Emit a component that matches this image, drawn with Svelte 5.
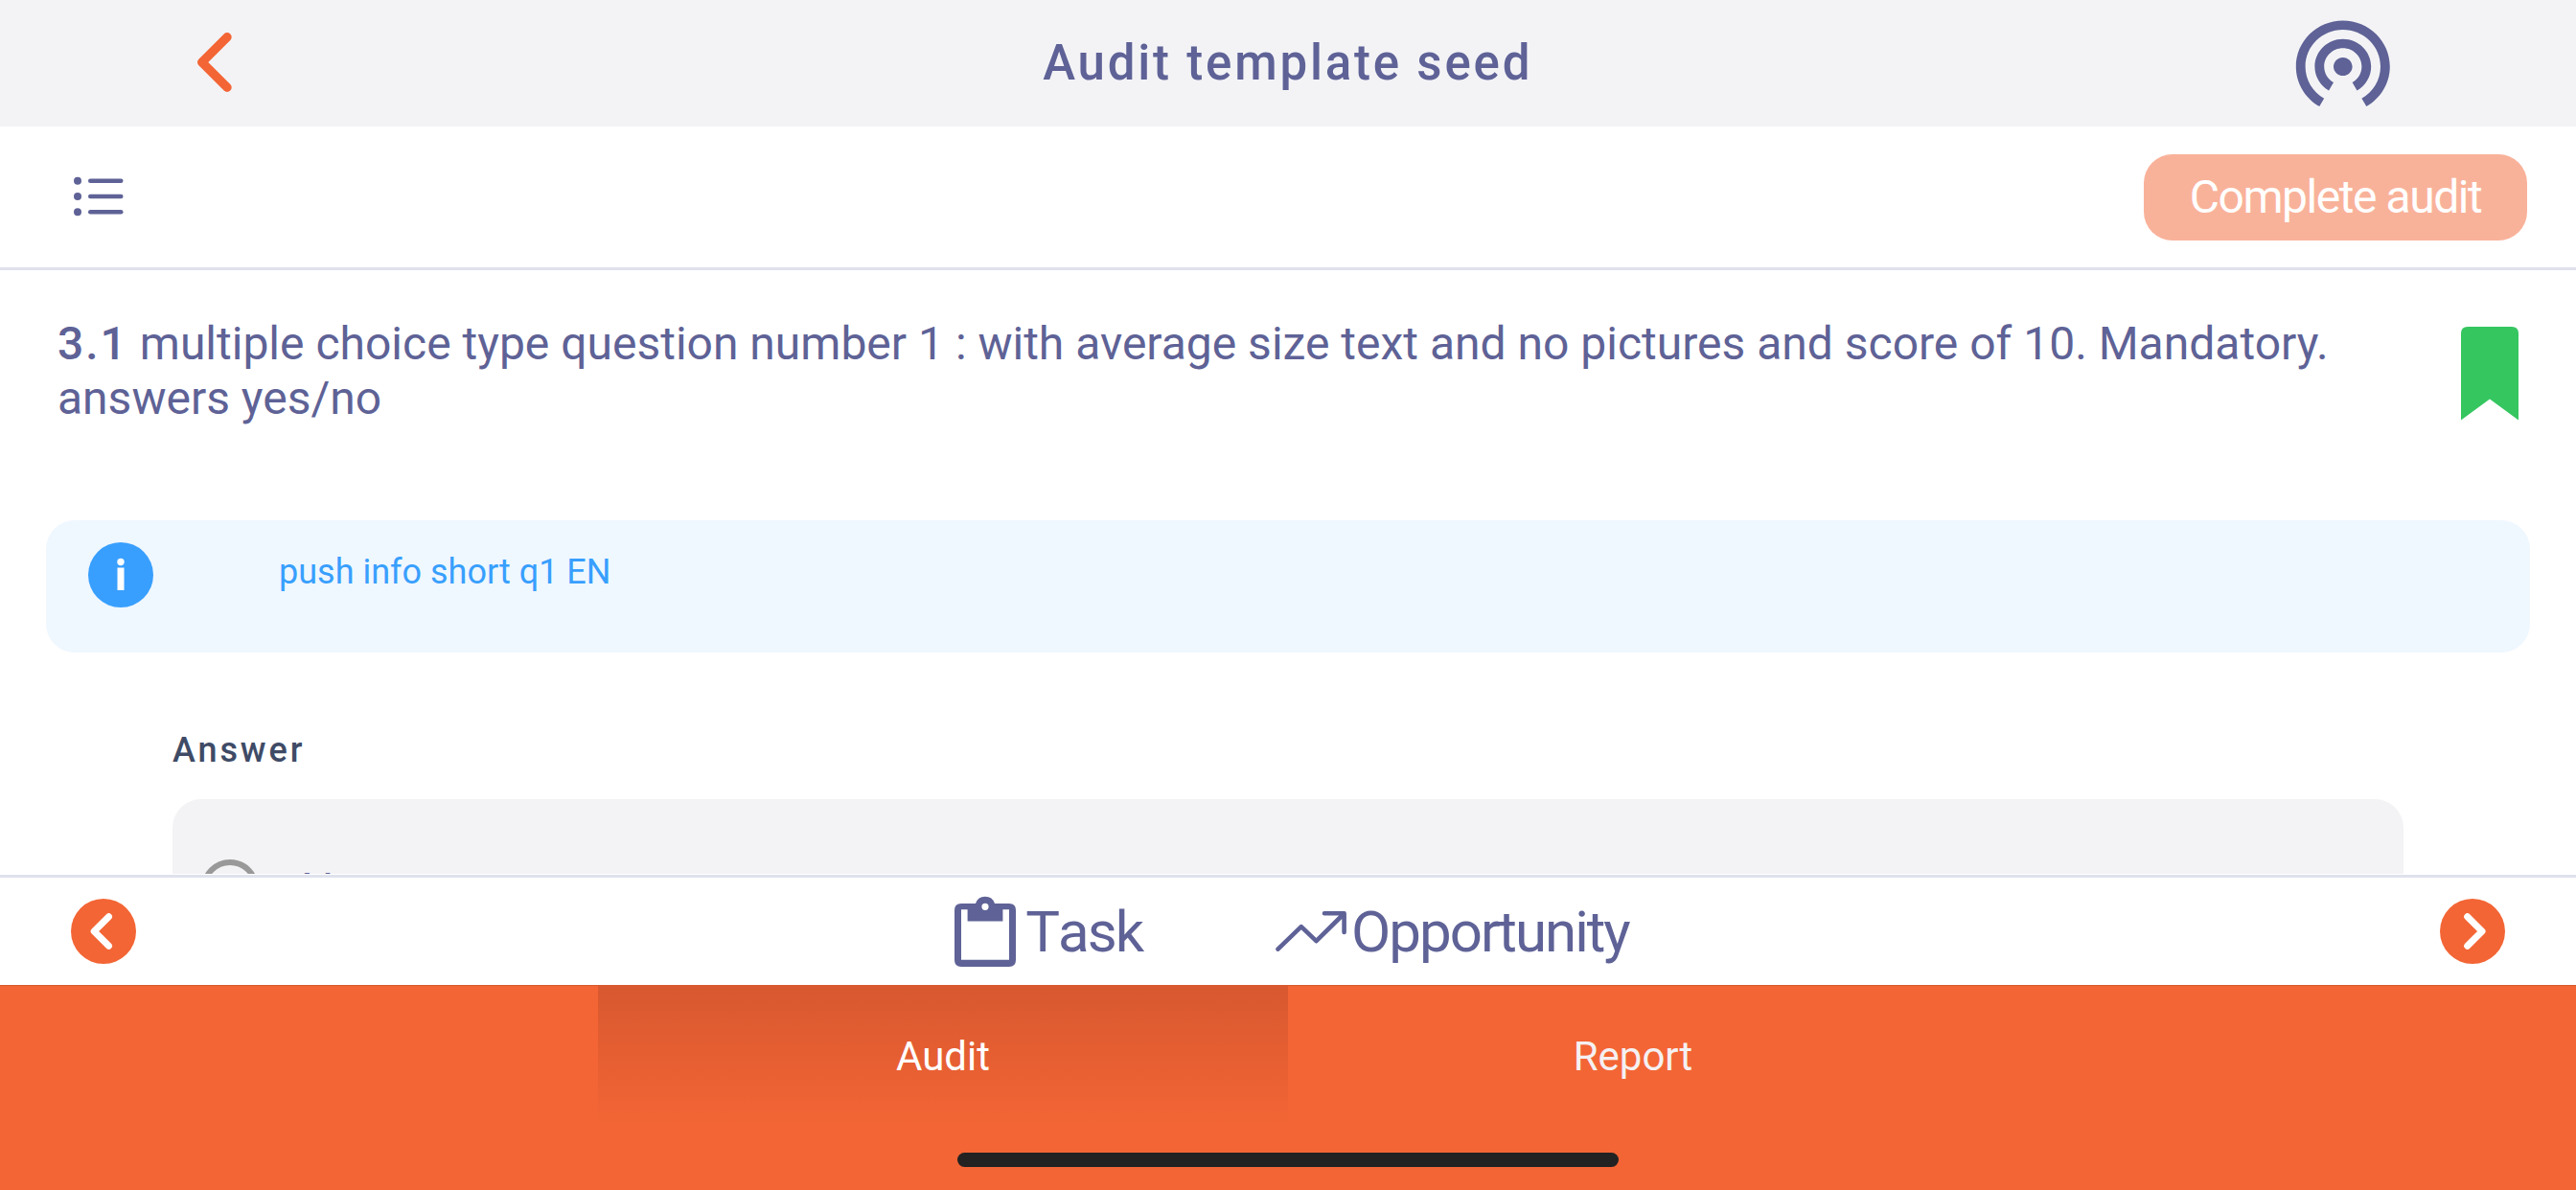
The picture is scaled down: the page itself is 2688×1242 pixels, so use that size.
<script lang="ts">
	let {
		title = 'Audit template seed',
		questionNumber = '3.1',
		question = 'multiple choice type question number 1 : with average size text and no pictures and score of 10. Mandatory. answers yes/no',
		info = 'push info short q1 EN',
		answers = ['No'],
	}: {
		title?: string;
		questionNumber?: string;
		question?: string;
		info?: string;
		answers?: string[];
	} = $props();

	const tabs = ['Audit', 'Report'];
	let activeTab = $state('Audit');
	let selected = $state('');
</script>

<div class="screen">
	<header class="header">
		<button class="back" aria-label="Back">
			<svg width="36" height="62" viewBox="0 0 36 62">
				<path d="M31 4.7 4.7 31 31 57.3" />
			</svg>
		</button>
		<h1 class="title">{title}</h1>
		<svg class="tether" viewBox="0 0 24 24" preserveAspectRatio="none">
			<path d="M12 11c-1.1 0-2 .9-2 2s.9 2 2 2 2-.9 2-2-.9-2-2-2zm6 2c0-3.31-2.69-6-6-6s-6 2.69-6 6c0 2.22 1.21 4.15 3 5.19l1-1.74c-1.19-.7-2-1.97-2-3.45 0-2.21 1.79-4 4-4s4 1.79 4 4c0 1.48-.81 2.75-2 3.45l1 1.74c1.79-1.04 3-2.97 3-5.19zM12 3C6.48 3 2 7.48 2 13c0 3.7 2.01 6.92 4.99 8.65l1-1.73C5.61 18.53 4 15.96 4 13c0-4.42 3.58-8 8-8s8 3.58 8 8c0 2.96-1.61 5.53-4 6.92l1 1.73c2.99-1.73 5-4.95 5-8.65 0-5.52-4.48-10-10-10z" />
		</svg>
	</header>

	<div class="toolbar">
		<svg class="list-icon" width="52" height="42" viewBox="0 0 52 42">
			{#each [4.8, 21, 37.2] as y}
				<circle cx="4" cy={y} r="4" />
				<rect x="15" y={y - 2.3} width="36.5" height="4.6" rx="2.3" />
			{/each}
		</svg>
		<button class="complete" disabled>Complete audit</button>
	</div>

	<main class="content">
		<div class="question-row">
			<p class="question"><b>{questionNumber}</b> {question}</p>
			<svg class="bookmark" width="60" height="98" viewBox="0 0 60 98">
				<path d="M7 0H53Q60 0 60 7V97.5L30 75.5 0 97.5V7Q0 0 7 0Z" />
			</svg>
		</div>

		<div class="info">
			<svg width="68" height="68" viewBox="0 0 68 68">
				<circle class="info-disc" cx="34" cy="34" r="34" />
				<circle cx="34" cy="20.5" r="3.7" />
				<rect x="30.5" y="26.5" width="7" height="23.5" />
			</svg>
			<span>{info}</span>
		</div>

		<section class="answer">
			<h2>Answer</h2>
			<div class="options">
				{#each answers as answer}
					<button class="option" onclick={() => (selected = answer)}>
						<span class="radio" class:checked={selected === answer}></span>
						<span class="option-label">{answer}</span>
					</button>
				{/each}
			</div>
		</section>
	</main>

	<div class="actions">
		<button class="round" aria-label="Previous">
			<svg width="68" height="68" viewBox="0 0 68 68">
				<path d="M39.5 18.7 24.2 34 39.5 49.3" />
			</svg>
		</button>
		<div class="links">
			<button class="link task">
				<svg width="64" height="74" viewBox="0 0 64 74">
					<path fill-rule="evenodd" d="M7 8H22A10.5 10.5 0 0 1 42 8H57Q64 8 64 15V67Q64 74 57 74H7Q0 74 0 67V15Q0 8 7 8ZM7 14.3V66.7H57V14.3H50.4V26.6H13.6V14.3ZM32 7.7A3.6 3.6 0 1 0 32 14.9 3.6 3.6 0 1 0 32 7.7Z" />
				</svg>
				Task
			</button>
			<button class="link opportunity">
				<svg width="74" height="42" viewBox="0 0 74 42">
					<path class="trend" d="M2.5 39.6 26.8 16.2 42.5 31.2 71 3M51 2.3H71.6V22" />
				</svg>
				Opportunity
			</button>
		</div>
		<button class="round" aria-label="Next">
			<svg width="68" height="68" viewBox="0 0 68 68">
				<path d="M28.7 18.7 44 34 28.7 49.3" />
			</svg>
		</button>
	</div>

	<nav class="tabs">
		<div class="tab-row">
			{#each tabs as tab}
				<button class="tab" class:active={activeTab === tab} onclick={() => (activeTab = tab)}>{tab}</button>
			{/each}
		</div>
		<div class="home-indicator"></div>
	</nav>
</div>

<style>
	:global(body) {
		margin: 0;
	}
	.screen {
		--orange: #f36535;
		--purple: #5e6296;
		--line: #dfe2ec;
		--grey: #f3f3f6;
		display: flex;
		flex-direction: column;
		height: 1242px;
		overflow: hidden;
		background: #fff;
		color: var(--purple);
		font-family: Roboto, sans-serif;
	}
	svg {
		display: block;
		flex-shrink: 0;
		fill: var(--purple);
	}
	button {
		padding: 0;
		border: none;
		background: none;
		color: inherit;
		font: inherit;
	}

	.header {
		display: flex;
		align-items: flex-start;
		justify-content: space-between;
		box-sizing: border-box;
		height: 132px;
		padding: 0 184px 0 206px;
		background: var(--grey);
	}
	.back {
		width: 95px;
		padding-top: 34px;
	}
	.back path {
		fill: none;
		stroke: var(--orange);
		stroke-width: 9.4;
		stroke-linecap: round;
		stroke-linejoin: round;
	}
	.title {
		margin: 0;
		padding-top: 36px;
		font-size: 51px;
		font-weight: 500;
		line-height: 60px;
		letter-spacing: 2.8px;
	}
	.tether {
		width: 117.6px;
		height: 115.4px;
		margin-top: 6.5px;
	}

	.toolbar {
		display: flex;
		align-items: center;
		justify-content: space-between;
		box-sizing: border-box;
		height: 150px;
		padding: 1px 51px 0 77px;
		border-bottom: 3px solid var(--line);
	}
	.list-icon {
		margin-bottom: 3px;
	}
	.complete {
		width: 400px;
		height: 90px;
		padding-bottom: 2px;
		border-radius: 30px;
		background: #f9b29a;
		color: #fff;
		font-size: 48px;
		letter-spacing: -1.44px;
	}

	.content {
		flex: 1;
		min-height: 0;
		overflow: hidden;
	}
	.question-row {
		display: flex;
		justify-content: space-between;
		height: 202px;
		padding: 59px 60px 0;
	}
	.question {
		width: 2400px;
		margin: -11px 0 0;
		font-size: 48px;
		line-height: 57px;
	}
	.question b {
		font-weight: 500;
		letter-spacing: 2px;
	}
	.bookmark {
		fill: #35c660;
	}
	.info {
		display: flex;
		box-sizing: border-box;
		height: 138px;
		margin: 0 48px;
		padding: 23px 44px;
		gap: 131px;
		border-radius: 30px;
		background: #eff7ff;
		color: #389ffe;
		font-size: 36px;
		line-height: 62px;
	}
	.info svg {
		fill: #fff;
	}
	.info-disc {
		fill: #389ffe;
	}

	.answer {
		padding: 81px 180px 0;
	}
	.answer h2 {
		margin: 0 0 30px;
		color: #3f4b66;
		font-size: 36px;
		font-weight: 500;
		line-height: 42px;
		letter-spacing: 2.9px;
	}
	.options {
		padding: 63px 30px;
		border-radius: 30px;
		background: var(--grey);
	}
	.option {
		display: flex;
		align-items: center;
		gap: 44px;
		height: 60px;
		font-size: 48px;
	}
	.option-label {
		padding-top: 2px;
	}
	.radio {
		box-sizing: border-box;
		width: 60px;
		height: 60px;
		border: 6px solid #999;
		border-radius: 50%;
	}
	.radio.checked {
		background: var(--orange);
	}

	.actions {
		display: flex;
		align-items: center;
		justify-content: space-between;
		height: 112px;
		margin-top: 1px;
		padding: 0 74px;
		border-top: 3px solid var(--line);
	}
	.round {
		border-radius: 50%;
		background: var(--orange);
	}
	.round path {
		fill: none;
		stroke: #fff;
		stroke-width: 7;
		stroke-linecap: round;
		stroke-linejoin: round;
	}
	.links {
		display: flex;
		gap: 139px;
		padding-left: 8px;
	}
	.link {
		display: flex;
		align-items: center;
		font-size: 60px;
		font-kerning: none;
		letter-spacing: -2px;
	}
	.task {
		gap: 10px;
	}
	.opportunity {
		gap: 5px;
	}
	.trend {
		fill: none;
		stroke: var(--purple);
		stroke-width: 4.6;
		stroke-linecap: round;
		stroke-linejoin: round;
	}

	.tabs {
		box-sizing: border-box;
		height: 214px;
		border-top: 1px solid #d8582f;
		background: var(--orange);
	}
	.tab-row {
		display: flex;
		justify-content: center;
	}
	.tab {
		width: 720px;
		height: 146px;
		color: #f5f0f2;
		font-size: 42px;
	}
	.tab.active {
		background: linear-gradient(#d8582f, var(--orange));
		color: #fff;
	}
	.home-indicator {
		width: 690px;
		height: 15px;
		margin: 28px auto 0;
		border-radius: 8px;
		background: #222;
	}
</style>
